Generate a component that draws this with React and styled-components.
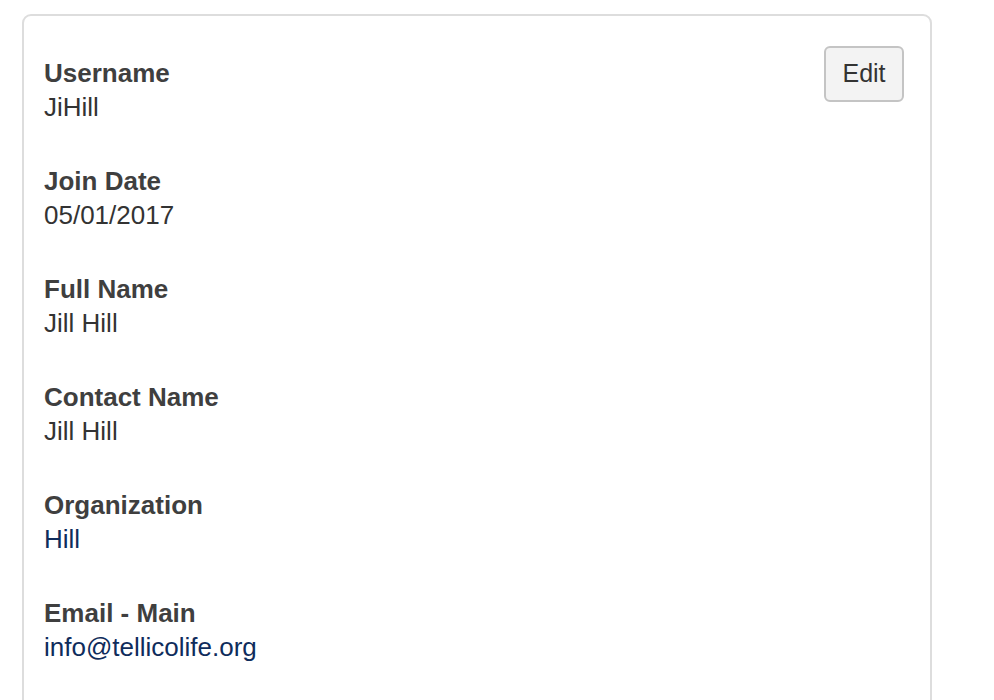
import React from "react";
import styled, { createGlobalStyle } from "styled-components";

const GlobalStyle = createGlobalStyle`
  body {
    margin: 0;
    background: #ffffff;
    font-family: "Liberation Sans", Arial, sans-serif;
  }
`;

const Page = styled.div`
  padding: 14px 62px 0 22px;
  height: 700px;
  box-sizing: border-box;
  overflow: hidden;
`;

const Card = styled.div`
  position: relative;
  border: 2px solid #dddddd;
  border-radius: 9px;
  padding: 40px 26px 40px 20px;
  min-height: 760px;
  box-sizing: border-box;
`;

const EditButton = styled.button`
  position: absolute;
  top: 30px;
  right: 26px;
  width: 80px;
  height: 56px;
  background: #f3f3f3;
  border: 2px solid #c4c4c4;
  border-radius: 6px;
  font-family: "Liberation Sans", Arial, sans-serif;
  font-size: 25px;
  color: #333333;
  padding: 0 0 2px;
`;

const Field = styled.div`
  margin-bottom: 40px;
`;

const Label = styled.div`
  font-size: 26px;
  line-height: 34px;
  font-weight: bold;
  color: #3f3f3f;
`;

const Value = styled.div`
  font-size: 26px;
  line-height: 34px;
  color: ${(p) => (p.$link ? "#0f2c5c" : "#333333")};
`;

const fields = [
  { label: "Username", value: "JiHill" },
  { label: "Join Date", value: "05/01/2017" },
  { label: "Full Name", value: "Jill Hill" },
  { label: "Contact Name", value: "Jill Hill" },
  { label: "Organization", value: "Hill", link: true },
  { label: "Email - Main", value: "info@tellicolife.org", link: true },
];

const App = () => (
  <Page>
    <GlobalStyle />
    <Card>
      <EditButton>Edit</EditButton>
      {fields.map((f) => (
        <Field key={f.label}>
          <Label>{f.label}</Label>
          <Value $link={f.link}>{f.value}</Value>
        </Field>
      ))}
    </Card>
  </Page>
);

export default App;
